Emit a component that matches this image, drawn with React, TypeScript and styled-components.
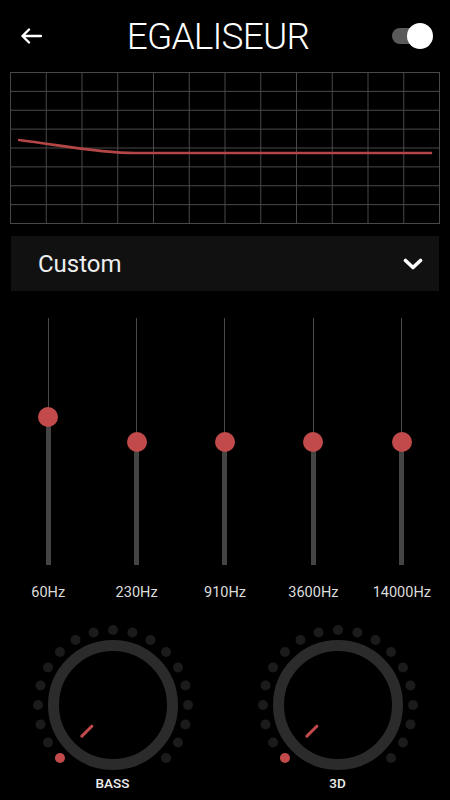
import styled, { createGlobalStyle } from "styled-components";

const RED = "#c24a4b";

const GlobalStyle = createGlobalStyle`
  html, body {
    margin: 0;
    padding: 0;
    background: #000;
  }
  body {
    font-family: Roboto, "Noto Sans", sans-serif;
    color: #eee;
  }
`;

const bands = [
  { label: "60Hz", value: 0.6 },
  { label: "230Hz", value: 0.498 },
  { label: "910Hz", value: 0.498 },
  { label: "3600Hz", value: 0.498 },
  { label: "14000Hz", value: 0.498 },
];

const Screen = styled.div`
  width: 450px;
  height: 800px;
  overflow: hidden;
  display: flex;
  flex-direction: column;
`;

const Header = styled.header`
  height: 72px;
  display: flex;
  align-items: center;
  justify-content: space-between;
  padding: 0 17px 0 20px;
  box-sizing: border-box;
`;

const BackButton = styled.button`
  background: none;
  border: 0;
  padding: 0;
  width: 24px;
  height: 18px;
  display: flex;
  align-items: center;
  cursor: pointer;
`;

const Title = styled.h1`
  margin: 0;
  font-family: Roboto, sans-serif;
  font-weight: 300;
  font-size: 37px;
  letter-spacing: -0.8px;
  color: #fff;
`;

const Toggle = styled.div`
  position: relative;
  width: 41px;
  height: 26px;
  display: flex;
  align-items: center;

  &::before {
    content: "";
    width: 37px;
    height: 16px;
    border-radius: 8px;
    background: #5a5a5a;
  }
  &::after {
    content: "";
    position: absolute;
    right: 0;
    top: 0;
    width: 26px;
    height: 26px;
    border-radius: 50%;
    background: #fff;
  }
`;

const Graph = styled.svg`
  display: block;
  margin: 0 10px;
`;

const PresetSelect = styled.div`
  margin: 12px 11px 0;
  height: 55px;
  background: #111;
  display: flex;
  align-items: center;
  justify-content: space-between;
  padding: 0 16px 0 27px;
  font-size: 24px;
  color: #eee;
`;

const SliderRow = styled.div`
  display: grid;
  grid-template-columns: repeat(5, 1fr);
  padding: 0 4px;
  margin-top: 27px;
`;

const Band = styled.div`
  display: flex;
  flex-direction: column;
  align-items: center;
`;

const Track = styled.div`
  position: relative;
  height: 247px;
  width: 20px;
  display: flex;
  flex-direction: column;
  align-items: center;
`;

const ThinPart = styled.div`
  width: 1px;
  background: #4a4a4a;
`;

const ThickPart = styled.div`
  flex: 1;
  width: 5px;
  background: #444;
`;

const Thumb = styled.div`
  position: absolute;
  left: 0;
  width: 20px;
  height: 20px;
  margin-top: -10px;
  border-radius: 50%;
  background: ${RED};
`;

const BandLabel = styled.div`
  margin-top: 18px;
  line-height: 20px;
  font-size: 14.5px;
  color: #ddd;
`;

const KnobRow = styled.div`
  display: grid;
  grid-template-columns: 1fr 1fr;
  margin-top: 22px;
`;

const KnobBox = styled.div`
  display: flex;
  flex-direction: column;
  align-items: center;
`;

const KnobLabel = styled.div`
  line-height: 26px;
  font-size: 13.5px;
  font-weight: 500;
  color: #eee;
`;

const Knob = ({ label }: { label: string }) => {
  const cx = 85;
  const cy = 80;
  const dots = Array.from({ length: 19 }, (_, i) => {
    const a = ((225 - i * 15) * Math.PI) / 180;
    return { x: cx + 75 * Math.cos(a), y: cy - 75 * Math.sin(a), on: i === 0 };
  });
  const ia = (225 * Math.PI) / 180;
  return (
    <KnobBox>
      <svg width="170" height="145" viewBox="0 0 170 145">
        {dots.map((d, i) => (
          <circle key={i} cx={d.x} cy={d.y} r="5" fill={d.on ? RED : "#1b1b1b"} />
        ))}
        <circle cx={cx} cy={cy} r="59.5" fill="none" stroke="#2b2b2b" strokeWidth="11" />
        <line
          x1={cx + 30 * Math.cos(ia)}
          y1={cy - 30 * Math.sin(ia)}
          x2={cx + 44 * Math.cos(ia)}
          y2={cy - 44 * Math.sin(ia)}
          stroke={RED}
          strokeWidth="3"
          strokeLinecap="round"
        />
      </svg>
      <KnobLabel>{label}</KnobLabel>
    </KnobBox>
  );
};

const ResponseGraph = () => {
  const w = 430;
  const h = 152;
  const cols = Array.from({ length: 13 }, (_, i) => 0.5 + (i * (w - 1)) / 12);
  const rows = Array.from({ length: 9 }, (_, i) => 0.5 + (i * (h - 1)) / 8);
  return (
    <Graph width={w} height={h} viewBox={`0 0 ${w} ${h}`}>
      {cols.map((x, i) => (
        <line key={`c${i}`} x1={x} y1="0" x2={x} y2={h} stroke="#484848" strokeWidth="1" />
      ))}
      {rows.map((y, i) => (
        <line key={`r${i}`} x1="0" y1={y} x2={w} y2={y} stroke="#484848" strokeWidth="1" />
      ))}
      <path
        d="M9 68 C 50 73, 88 81, 125 81 L 421 81"
        fill="none"
        stroke="#b54647"
        strokeWidth="2.6"
        strokeLinecap="round"
      />
    </Graph>
  );
};

const App = () => {
  return (
    <Screen>
      <GlobalStyle />
      <Header>
        <BackButton aria-label="back">
          <svg width="22" height="16" viewBox="0 0 22 16">
            <path
              d="M21 8 H2.5 M9 1.5 L2.5 8 L9 14.5"
              fill="none"
              stroke="#fff"
              strokeWidth="2.4"
              strokeLinecap="round"
              strokeLinejoin="round"
            />
          </svg>
        </BackButton>
        <Title>EGALISEUR</Title>
        <Toggle />
      </Header>

      <ResponseGraph />

      <PresetSelect>
        <span>Custom</span>
        <svg width="20" height="12" viewBox="0 0 20 12">
          <path
            d="M2.5 2.5 L10 9.5 L17.5 2.5"
            fill="none"
            stroke="#fff"
            strokeWidth="3.6"
            strokeLinecap="round"
            strokeLinejoin="round"
          />
        </svg>
      </PresetSelect>

      <SliderRow>
        {bands.map((b) => (
          <Band key={b.label}>
            <Track>
              <ThinPart style={{ height: `${(1 - b.value) * 100}%` }} />
              <ThickPart />
              <Thumb style={{ top: `${(1 - b.value) * 100}%` }} />
            </Track>
            <BandLabel>{b.label}</BandLabel>
          </Band>
        ))}
      </SliderRow>

      <KnobRow>
        <Knob label="BASS" />
        <Knob label="3D" />
      </KnobRow>
    </Screen>
  );
};

export default App;
